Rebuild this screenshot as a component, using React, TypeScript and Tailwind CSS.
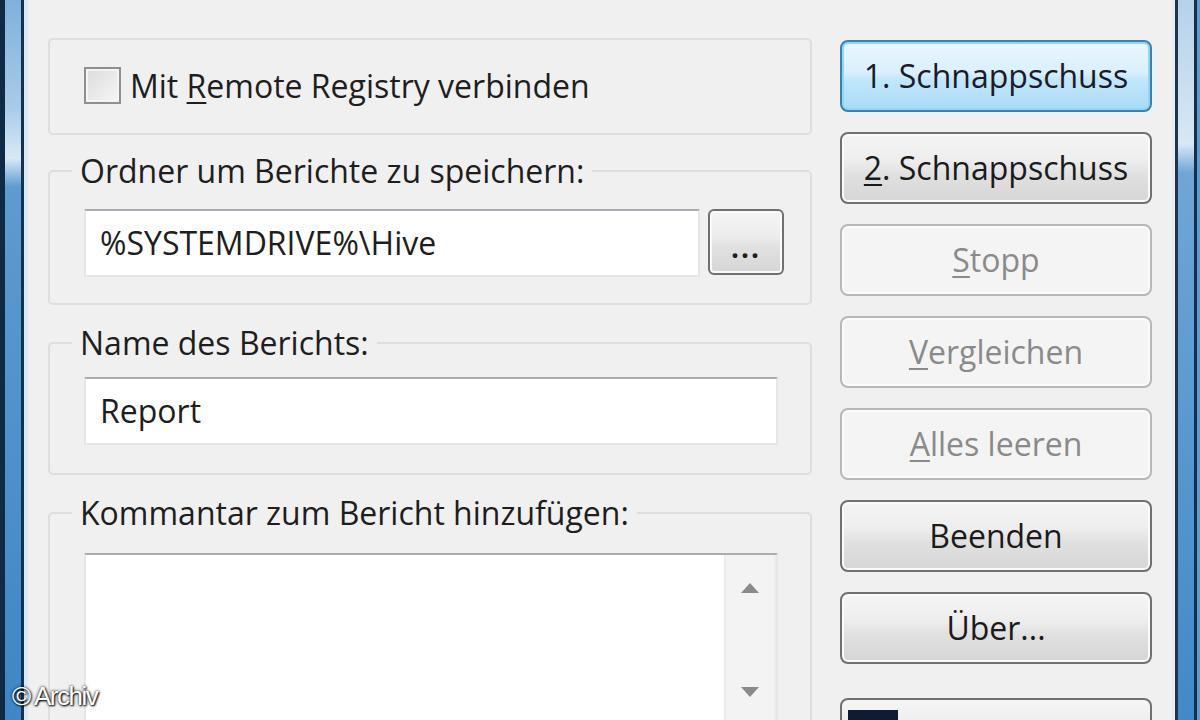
import React from "react";

const font = { fontFamily: '"Open Sans", "Noto Sans", sans-serif' };

function Frame({ side }: { side: "left" | "right" }) {
  return (
    <div className="flex h-full w-[28px] shrink-0">
      {side === "left" ? (
        <>
          <div className="w-[5px] bg-[#0f2a44]" />
          <div className="w-[16px] bg-[linear-gradient(to_bottom,#7fb0dc_0%,#a9cbe8_15%,#d9e9f5_22%,#5d9bd0_26%,#3f86c6_100%)]" />
          <div className="w-[3px] bg-[#14314f]" />
          <div className="w-[4px] bg-[#dce9f3]" />
        </>
      ) : (
        <>
          <div className="w-[3px] bg-[#e6eef4]" />
          <div className="w-[3px] bg-[#1b3552]" />
          <div className="w-[16px] bg-[linear-gradient(to_bottom,#b5d2ea_0%,#d8e8f4_20%,#6fa6d6_24%,#4189c8_100%)]" />
          <div className="w-[3px] bg-[#12304e]" />
          <div className="w-[3px] bg-[#5d9bd0]" />
        </>
      )}
    </div>
  );
}

type Variant = "default" | "normal" | "disabled";

const grayFill = "bg-[linear-gradient(to_bottom,#f5f5f5_0%,#ededed_40%,#e0e0e0_60%,#d6d6d6_100%)]";

function Btn({ children, variant = "normal" }: { children: React.ReactNode; variant?: Variant }) {
  const base = "flex h-[72px] w-full shrink-0 items-center justify-center rounded-lg border-2 text-[32px] leading-none";
  if (variant === "default")
    return (
      <div className={`${base} border-[#3c7fb1] bg-[linear-gradient(to_bottom,#eaf6fd_0%,#d9f0fc_45%,#c2e7fb_55%,#a9daf5_100%)] text-[#1b1b2a] shadow-[inset_0_0_0_2px_#86dcf7]`}>
        {children}
      </div>
    );
  if (variant === "disabled")
    return (
      <div className={`${base} border-[#b5b8ba] bg-[#f4f4f4] text-[#8a8a8a] shadow-[inset_0_0_0_2px_#fbfbfb]`}>
        {children}
      </div>
    );
  return (
    <div className={`${base} border-[#707070] ${grayFill} text-[#1b1b1b] shadow-[inset_0_0_0_2px_#fafafa]`}>
      {children}
    </div>
  );
}

function Group({ label, children, className = "" }: { label?: string; children: React.ReactNode; className?: string }) {
  return (
    <fieldset className={`rounded-[5px] border-2 border-[#dcdee0] ${className}`}>
      {label && <legend className="ml-[22px] px-[8px] text-[32px] leading-[40px] text-[#1e1e1e]">{label}</legend>}
      {children}
    </fieldset>
  );
}

function TextBox({ value, className = "" }: { value: string; className?: string }) {
  return (
    <div className={`flex h-[68px] items-center border-2 border-[#e3e7ec] border-t-[#a9acb2] bg-white px-[14px] text-[32px] text-[#1e1e1e] ${className}`}>
      {value}
    </div>
  );
}

export default function App() {
  return (
    <div className="relative flex h-[720px] w-[1200px] overflow-hidden bg-[#f0f0f0]" style={font}>
      <Frame side="left" />
      <div className="flex flex-1 gap-[28px] px-[20px]">
        <div className="flex w-[764px] shrink-0 flex-col pt-[38px]">
          <Group className="pb-[29px]">
            <div className="flex items-center gap-[9px] pl-[34px] pt-[27px]">
              <div className="h-[37px] w-[37px] border-2 border-[#8f8f8f] bg-[linear-gradient(135deg,#dcdcdc,#f6f6f6)] shadow-[inset_0_0_0_2px_#f4f4f4]" />
              <span className="text-[32px] leading-none text-[#1e1e1e]">
                Mit <span className="underline decoration-2 underline-offset-4">R</span>emote Registry verbinden
              </span>
            </div>
          </Group>
          <Group label="Ordner um Berichte zu speichern:" className="mt-[16px] pb-[26px]">
            <div className="flex gap-[8px] pl-[34px] pr-[26px] pt-[18px]">
              <TextBox value="%SYSTEMDRIVE%\Hive" className="flex-1" />
              <div className={`flex h-[66px] w-[76px] items-center justify-center rounded-md border-2 border-[#707070] ${grayFill} pt-[10px] text-[28px] font-bold leading-none tracking-[2px] text-[#1e1e1e] shadow-[inset_0_0_0_2px_#fafafa]`}>
                ...
              </div>
            </div>
          </Group>
          <Group label="Name des Berichts:" className="mt-[18px] pb-[28px]">
            <div className="pl-[34px] pr-[32px] pt-[14px]">
              <TextBox value="Report" />
            </div>
          </Group>
          <Group label="Kommantar zum Bericht hinzufügen:" className="mt-[18px] h-[300px]">
            <div className="pl-[34px] pr-[32px] pt-[20px]">
              <div className="flex h-[240px] border-2 border-[#e3e7ec] border-t-[#a9acb2] bg-white">
                <div className="flex-1" />
                <div className="flex w-[52px] flex-col items-center border-x-2 border-[#ececec] bg-[#f3f3f3] pt-[26px]">
                  <svg width="22" height="14" viewBox="0 0 22 14">
                    <path d="M11 2 L20 12 L2 12 Z" fill="#8a8a8a" />
                  </svg>
                  <div className="h-[90px]" />
                  <svg width="22" height="14" viewBox="0 0 22 14">
                    <path d="M2 2 L20 2 L11 12 Z" fill="#8a8a8a" />
                  </svg>
                </div>
              </div>
            </div>
          </Group>
        </div>
        <div className="flex w-[312px] shrink-0 flex-col gap-[20px] pt-[40px]">
          <Btn variant="default">1. Schnappschuss</Btn>
          <Btn>
            <span className="underline decoration-2 underline-offset-4">2</span>. Schnappschuss
          </Btn>
          <Btn variant="disabled">
            <span className="underline decoration-2 underline-offset-4">S</span>topp
          </Btn>
          <Btn variant="disabled">
            <span className="underline decoration-2 underline-offset-4">V</span>ergleichen
          </Btn>
          <Btn variant="disabled">
            <span className="underline decoration-2 underline-offset-4">A</span>lles leeren
          </Btn>
          <Btn>Beenden</Btn>
          <Btn>Über...</Btn>
          <div className={`mt-[14px] flex h-[72px] w-full shrink-0 items-start rounded-lg border-2 border-[#707070] ${grayFill} pl-[6px] pt-[10px]`}>
            <div className="h-[40px] w-[50px] bg-[#0e1c33]" />
          </div>
        </div>
      </div>
      <Frame side="right" />
      <div className="absolute bottom-[11px] left-[12px] text-[26px] leading-none tracking-[-1.5px] text-white [text-shadow:0_0_3px_#000,1px_1px_2px_#000]" style={{ fontFamily: '"Liberation Sans", Arial, sans-serif' }}>
        © Archiv
      </div>
    </div>
  );
}
